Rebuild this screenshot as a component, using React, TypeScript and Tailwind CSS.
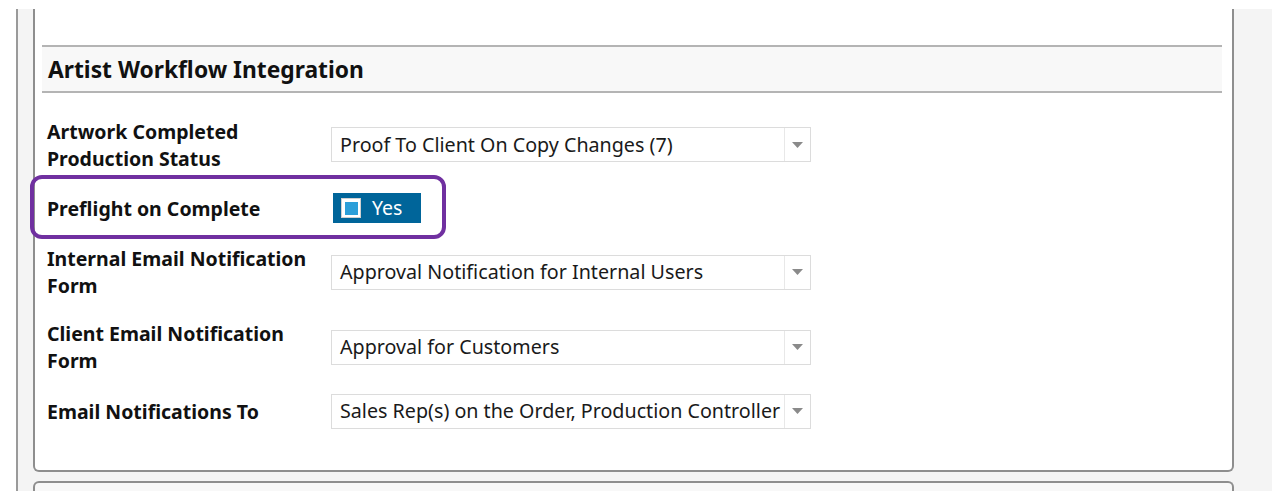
import React from "react";

const font = { fontFamily: '"Noto Sans", "Open Sans", sans-serif' };

function Caret() {
    return (
        <svg width="11" height="6" viewBox="0 0 11 6" className="block">
            <path d="M0 0 L11 0 L5.5 6 Z" fill="#8a8a8a" />
        </svg>
    );
}

function SelectBox({ value }: { value: string }) {
    return (
        <div className="flex h-[35px] w-[480px] items-stretch border border-[#dcdcdc] bg-white">
            <div className="flex flex-1 items-center overflow-hidden whitespace-nowrap pl-[8px] text-[19.7px] text-[#1a1a1a]">
                {value}
            </div>
            <div className="flex w-[26px] items-center justify-center border-l border-[#e8e8e8]">
                <Caret />
            </div>
        </div>
    );
}

function Row({ label, height, children }: { label: React.ReactNode; height: string; children: React.ReactNode }) {
    return (
        <div className={`flex items-center ${height}`}>
            <div className="w-[284px] text-[19.5px] font-bold leading-[27px] text-[#111]">{label}</div>
            {children}
        </div>
    );
}

export default function App() {
    return (
        <div className="h-[491px] w-[1277px] overflow-hidden bg-white" style={font}>
            <div className="mt-[9px] ml-[16px] flex h-[482px] w-[1256px] border-l-2 border-[#9a9a9a] bg-[#f4f4f4] pl-[15px]">
                <div className="flex w-[1201px] flex-col">
                    <div className="relative h-[463px] shrink-0 rounded-b-[6px] border-2 border-t-0 border-[#8e8e8e] bg-white pl-[7px] pr-[10px]">
                        <div className="mt-[36px] flex h-[48px] items-center border-y-2 border-[#b4b4b4] bg-[#f8f8f8] pl-[6px] pt-[3px] text-[22.8px] font-bold text-[#111]">
                            Artist Workflow Integration
                        </div>

                        <div className="mt-[24px] flex flex-col gap-[19px] pl-[5px]">
                            <Row label={<>Artwork Completed<br />Production Status</>} height="h-[55px]">
                                <SelectBox value="Proof To Client On Copy Changes (7)" />
                            </Row>
                            <Row label="Preflight on Complete" height="h-[34px]">
                                <button type="button" className="ml-[2px] flex h-[30px] w-[88px] items-center gap-[11px] bg-[#00659a] pl-[8px] text-[19.5px] text-white">
                                    <span className="flex h-[20px] w-[20px] items-center justify-center border border-[#d0d0d0] bg-white">
                                        <span className="h-[13px] w-[13px] bg-[#2c9fd9]" />
                                    </span>
                                    Yes
                                </button>
                            </Row>
                            <Row label={<>Internal Email Notification<br />Form</>} height="h-[56px]">
                                <SelectBox value="Approval Notification for Internal Users" />
                            </Row>
                            <Row label={<>Client Email Notification<br />Form</>} height="h-[56px]">
                                <SelectBox value="Approval for Customers" />
                            </Row>
                            <Row label="Email Notifications To" height="h-[34px]">
                                <SelectBox value="Sales Rep(s) on the Order, Production Controller" />
                            </Row>
                        </div>

                        {/* highlight annotation */}
                        <div className="pointer-events-none absolute left-[-5px] top-[166px] h-[64px] w-[416px] rounded-[12px] border-4 border-[#7030a0]" />
                    </div>
                    <div className="mt-[9px] h-[20px] shrink-0 rounded-t-[6px] border-2 border-b-0 border-[#8e8e8e] bg-[#f8f8f8]" />
                </div>
            </div>
        </div>
    );
}
